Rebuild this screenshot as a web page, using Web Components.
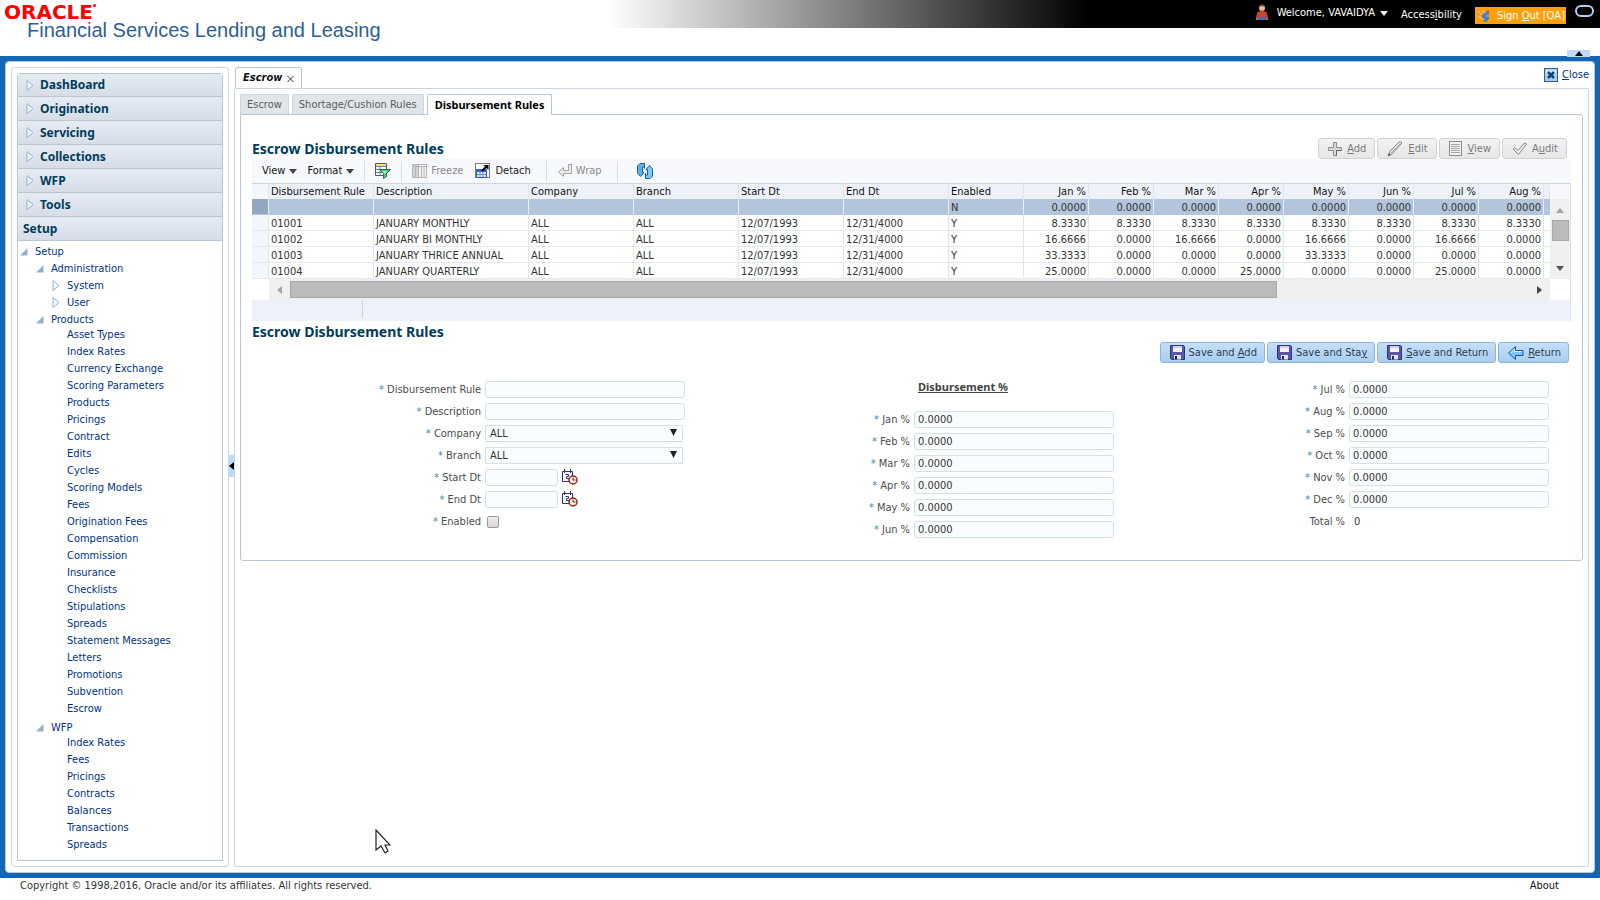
<!DOCTYPE html>
<html lang="en">
<head>
<meta charset="utf-8">
<title>Financial Services Lending and Leasing</title>
<style>
  :root {
    --line: #b9c6d3;
    --ink: #333;
    --link: #003286;
    --heading: #003d5b;
    --bold-font: "Noto Sans", "Open Sans", sans-serif;
  }
  body { margin: 0; font: 11px/16px "DejaVu Sans Condensed", "DejaVu Sans", Tahoma, sans-serif; color: var(--ink); background: #fff; }
</style>
</head>
<body>
<lending-app></lending-app>

<script>
const define = (name, html, setup) => {
  const template = document.createElement('template');
  template.innerHTML = html;
  customElements.define(name, class extends HTMLElement {
    constructor() {
      super();
      this.attachShadow({ mode: 'open' }).append(template.content.cloneNode(true));
    }
    connectedCallback() {
      if (setup && !this.ready) { this.ready = true; setup(this, this.shadowRoot); }
    }
  });
};

/* ---------- icons ---------- */
const ICONS = {
  user: [14, 18, '<circle cx="7" cy="4" r="3" fill="#e9b98c"/><path d="M4 3q1-3 3-3t3 3q-3-2-6 0z" fill="#6b4423"/><path d="M2 9q1-2 5-2t5 2l1 5H1z" fill="#c8452a"/><path d="M3 13h8v3H3z" fill="#3a6fc4"/><path d="M1 14h2v2H1zM11 14h2v2h-2z" fill="#e2582f"/>'],
  signout: [14, 14, '<path d="M1 2h8v4l-3 1v3L1 6z" fill="#f0912d"/><path d="M1 2l4 4M5 2l4 2M2 7l5 4" stroke="#ffe2a8"/><path d="M5 6l7-5v5l-4 1 4 1v2l-3 3-4-1 3-2-3-1z" fill="#3a86c8"/><path d="M9 2l3-1v4z" fill="#e0522b"/>'],
  closebox: [14, 14, '<rect x=".5" y=".5" width="13" height="13" fill="#a9cdeb" stroke="#2d5f91"/><path d="M2 2h10v4H2z" fill="#d3e6f8"/><path d="M4 4l6 6M10 4l-6 6" stroke="#0e4379" stroke-width="2.500"/>'],
  add: [14, 14, '<path d="M5.500.5h3v5h5v3h-5v5h-3v-5h-5v-3h5z" fill="#d8d8d8" stroke="#8f8f8f"/><path d="M8.500 8.500v5M8.500 8.500h5" stroke="#666"/>'],
  edit: [16, 16, '<path d="M1 15l2-5L12 1q2-1 3 1L5 13z" fill="#e3e3e3" stroke="#8a8a8a"/><path d="M4 12l9-9" stroke="#aaa"/><path d="M1 15l1-3 2 2z" fill="#555"/>'],
  view: [14, 16, '<rect x=".5" y=".5" width="12" height="14" fill="#f4f4f4" stroke="#8b8b8b"/><path d="M2 3.500h9M2 5.500h9M2 7.500h9M2 9.500h9M2 11.500h9" stroke="#a4a4a4"/>'],
  audit: [15, 14, '<path d="M1 7l2-1.500 3 3L12.500 1l2 1L6.500 12.500z" fill="#eee" stroke="#888"/>'],
  filter: [16, 16, '<path d="M.5.5h11v12H.5z" fill="#fff" stroke="#556"/><path d="M1 1h10v2H1z" fill="#f2e27c"/><path d="M1 3.500h10M1 6.500h10M1 9.500h10M5 3v10" stroke="#667aa0"/><path d="M4.500 6.500h11l-4 4v3l-3 2v-5z" fill="#4fc172" stroke="#177a3c"/><path d="M7 8h5l-2 3z" fill="#b9f0c6"/>'],
  freeze: [15, 14, '<path d="M.5.5h14v13H.5z" fill="#f3f3f3" stroke="#b5b5b5"/><path d="M1 1h5v12H1z" fill="#d2d2d2"/><path d="M.5 2.500h14M3.500 3v11M6.500 1v13M9.500 3v11M12 3v11" stroke="#b4b4b4"/>'],
  detach: [16, 16, '<rect x=".5" y=".5" width="14" height="14" fill="#fff" stroke="#000" stroke-dasharray="1 1"/><path d="M1.500 6.500h10v8h-10z" fill="#dce9fb" stroke="#2c5cb0"/><path d="M1 6h11v3H1z" fill="#2f6ad0"/><path d="M5 9v5M8 9v5M2 11.500h9" stroke="#6e93cc"/><path d="M7 8l5-5" stroke="#000" stroke-width="2"/><path d="M8.500 2h5v5z" fill="#000"/>'],
  wrap: [14, 14, '<path d="M10.500.5h3v9h-8v3l-5-4.500 5-4.500v3h5z" fill="#ececec" stroke="#a2a2a2"/>'],
  refresh: [16, 16, '<path d="M7.500.5H3L.5 3v6.500H0l3.500 4 3.500-4H5.500V4h2z" fill="#5bb3ec" stroke="#1a5da8"/><path d="M8.500 15.500H13l2.500-2.500V6.500h.5l-3.500-4-3.500 4h1.500V12h-2z" fill="#7fcaf5" stroke="#1a5da8"/><path d="M7.500.5v5M8.500 10v5" stroke="#1a5da8"/>'],
  save: [15, 15, '<path d="M.5.5h13l1 1v13H1.500l-1-1z" fill="#5a58a6" stroke="#35336f"/><path d="M3 1h9v6H3z" fill="#f2f2fb"/><path d="M3 1h9v2H3z" fill="#d0d0e6"/><path d="M4 10h7v4.500H4z" fill="#e4e4f0"/><path d="M5 11h2v3.500H5z" fill="#222055"/>'],
  back: [16, 14, '<path d="M7.500.5v4h7.500v5H7.500v4L.5 7z" fill="#7cc3f7" stroke="#1657a8"/><path d="M2.500 7L6.500 3v2.500H14" fill="none" stroke="#d8f0ff"/>'],
  calendar: [16, 16, '<path d="M.5 2.500h10v10H.5z" fill="#fbfbff" stroke="#34346c"/><path d="M2.500 0v4M8.500 0v4" stroke="#34346c"/><path d="M3.500 5.500h3v2h-2v2h3" fill="none" stroke="#34346c"/><circle cx="11" cy="11" r="4" fill="#fff6dd" stroke="#a3221e" stroke-width="1.500"/><path d="M11 8.500V11h2.500" fill="none" stroke="#333"/>'],
  right: [8, 11, '<path d="M1 .5l6 5-6 5z" fill="#f7fbff" stroke="#8fb0cf"/>'],
  open: [8, 8, '<path d="M7.500 0v7.500H0z" fill="#8fb1d0"/>'],
  drop: [7, 7, '<path d="M0 0h7L3.500 7z" fill="currentColor"/>'],
  cross: [7, 8, '<path d="M.5 1l6 6M6.500 1l-6 6" stroke="#333"/>'],
  down: [8, 5, '<path d="M0 0h8L4 5z" fill="currentColor"/>'],
  up: [8, 5, '<path d="M0 5h8L4 0z" fill="currentColor"/>'],
  left: [5, 8, '<path d="M5 0v8L0 4z" fill="currentColor"/>'],
  next: [5, 8, '<path d="M0 0v8l5-4z" fill="currentColor"/>'],
  cursor: [16, 25, '<path d="M1 1v20l5-4 4 7 3-2-3-6h5z" fill="#fff" stroke="#223" stroke-width="1.200"/>']
};
define('ui-icon', '<style>:host{display:inline-block;flex:none;line-height:0}svg{display:block}</style>', (el, root) => {
  const [w, h, body] = ICONS[el.getAttribute('name')];
  const box = document.createElement('div');
  box.innerHTML = `<svg width="${w}" height="${h}" viewBox="0 0 ${w} ${h}" fill="none" aria-hidden="true">${body}</svg>`;
  root.append(box);
});

/* ---------- banner ---------- */
define('app-banner', `
<style>
  :host { display: block; height: 56px; background: linear-gradient(90deg, #fff 38%, #000 68%) 0 0 / 100% 28px no-repeat; }
  .bar { display: flex; justify-content: space-between; align-items: flex-start; }
  .logo { display: flex; align-items: flex-start; font: bold 20px/24px "DejaVu Sans", sans-serif; color: #f00; padding-left: 4px; }
  .logo i { width: 3px; height: 3px; margin-top: 4px; border-radius: 2px; background: #f00; }
  h1 { margin: -4px 0 0 27px; font: 20px/20px "Liberation Sans", Arial, sans-serif; color: #2c6094; }
  nav { display: flex; align-items: flex-start; color: #fff; padding-right: 6px; }
  button { all: unset; cursor: pointer; }
  a { color: inherit; text-decoration: none; }
  .user { display: flex; align-items: center; gap: 8px; height: 26px; }
  .user span { display: flex; align-items: center; gap: 5px; }
  .acc { padding: 7px 13px 0 13px; }
  .out { display: flex; align-items: center; gap: 6px; margin-top: 7px; height: 17px; background: #ff9f0a; padding: 0 1px 0 2px; }
  .ring { width: 15px; height: 8px; border: 2px solid #b4cdf0; border-radius: 8px; margin: 5px 0 0 9px; }
</style>
<div class="bar">
  <div><span class="logo">ORACLE<i></i></span><h1>Financial Services Lending and Leasing</h1></div>
  <nav>
    <button class="user"><ui-icon name="user"></ui-icon><span>Welcome, VAVAIDYA <ui-icon name="down"></ui-icon></span></button>
    <a class="acc" href="#">Access<u>i</u>bility</a>
    <a class="out" href="#"><ui-icon name="signout"></ui-icon><span>Sign <u>O</u>ut [QA]</span></a>
    <div class="ring"></div>
  </nav>
</div>`);

/* ---------- side navigation ---------- */
const TREE = [
  ['open', 0, 'Setup'], ['open', 1, 'Administration'], ['right', 2, 'System'], ['right', 2, 'User'],
  ['open', 1, 'Products', ['Asset Types', 'Index Rates', 'Currency Exchange', 'Scoring Parameters', 'Products', 'Pricings', 'Contract', 'Edits', 'Cycles', 'Scoring Models', 'Fees', 'Origination Fees', 'Compensation', 'Commission', 'Insurance', 'Checklists', 'Stipulations', 'Spreads', 'Statement Messages', 'Letters', 'Promotions', 'Subvention', 'Escrow']],
  ['open', 1, 'WFP', ['Index Rates', 'Fees', 'Pricings', 'Contracts', 'Balances', 'Transactions', 'Spreads']]
];
define('nav-tree', `
<style>
  :host { display: block; padding: 2px 0 3px 2px; }
  ul { list-style: none; margin: 0; padding: 0; }
  a { color: var(--link); text-decoration: none; line-height: 17px; }
  .row { display: flex; align-items: center; height: 17px; }
  .row ui-icon { width: 15px; }
  .l1 { padding-left: 16px; } .l2 { padding-left: 32px; }
  ul ul { margin: -2px 0 2px 47px; }
  ul ul li { height: 17px; }
</style><ul></ul>`, (el, root) => {
  root.querySelector('ul').innerHTML = TREE.map(([icon, level, name, kids]) =>
    `<li><div class="row l${level}"><ui-icon name="${icon}"></ui-icon><a href="#">${name}</a></div>${kids ? `<ul>${kids.map(k => `<li><a href="#">${k}</a></li>`).join('')}</ul>` : ''}</li>`).join('');
});
define('side-nav', `
<style>
  :host { display: block; position: relative; box-sizing: border-box; width: 218px; flex: none; border: 1px solid #cbd5df; border-radius: 3px; padding: 5px; }
  .box { box-sizing: border-box; height: 100%; border: 1px solid var(--line); border-top: 0; border-radius: 4px 4px 0 0; overflow: hidden; }
  h2 { margin: 0; }
  h2 button { all: unset; box-sizing: border-box; display: flex; align-items: center; gap: 6px; width: 100%; height: 24px; padding-left: 8px; cursor: pointer;
    font: bold 12px/23px var(--bold-font); color: var(--heading); border-bottom: 1px solid var(--line); background: linear-gradient(#e6ebf3, #d6dde7); }
  h2:first-child button { line-height: 22px; border-top: 1px solid var(--line); }
  h2 button.current { padding-left: 5px; }
  .grip { all: unset; position: absolute; right: -7px; top: 50%; margin-top: -12px; width: 7px; height: 22px; background: #c0daf5; color: #000; display: flex; align-items: center; justify-content: center; }
</style>
<div class="box"><div class="heads"></div><nav-tree></nav-tree></div>
<button class="grip" aria-label="Collapse pane"><ui-icon name="left"></ui-icon></button>`, (el, root) => {
  root.querySelector('.heads').innerHTML = ['DashBoard', 'Origination', 'Servicing', 'Collections', 'WFP', 'Tools']
    .map(t => `<h2><button><ui-icon name="right"></ui-icon>${t}</button></h2>`).join('') + '<h2><button class="current">Setup</button></h2>';
});

/* ---------- buttons ---------- */
define('action-button', `
<style>
  :host { display: inline-block; }
  button { box-sizing: border-box; display: flex; align-items: center; gap: 4px; height: 21px; padding: 0 7px 0 9px; margin: 0; font: inherit; white-space: nowrap;
    border: 1px solid #8fb4da; border-radius: 3px; color: #2b3d4f; background: linear-gradient(#c5dff8, #a9cdf0); }
  :host([muted]) button { gap: 5px; padding: 0 8px 0 9px; color: #7b7b7b; border-color: #d2d2d2; background: linear-gradient(#f3f3f3, #e6e6e6); }
</style><button><slot name="icon"></slot><span><slot></slot></span></button>`);

/* ---------- table tool bar ---------- */
define('table-toolbar', `
<style>
  :host { display: flex; align-items: center; height: 24px; background: #f6f8fb; color: #222; }
  button { all: unset; display: flex; align-items: center; gap: 4px; cursor: pointer; }
  button[disabled] { color: #8b8b8b; }
  .menu { margin-left: 10px; color: #111; }
  i { width: 1px; height: 20px; margin: 0 10px; background: #d5dde6; }
  .wide { margin: 0 11px 0 15px; }
  .far { margin: 0 19px 0 15px; }
  .detach { margin-left: 12px; }
  ui-icon[name="down"] { color: #444; }
</style>
<button class="menu">View <ui-icon name="down"></ui-icon></button>
<button class="menu">Format <ui-icon name="down"></ui-icon></button>
<i></i>
<button aria-label="Query by example"><ui-icon name="filter"></ui-icon></button>
<i></i>
<button disabled><ui-icon name="freeze"></ui-icon>Freeze</button>
<button class="detach"><ui-icon name="detach"></ui-icon>Detach</button>
<i class="wide"></i>
<button disabled><ui-icon name="wrap"></ui-icon>Wrap</button>
<i class="far"></i>
<button aria-label="Refresh"><ui-icon name="refresh"></ui-icon></button>`);

/* ---------- rules table ---------- */
const COLS = [['', 17], ['Disbursement Rule', 105], ['Description', 155], ['Company', 105], ['Branch', 105], ['Start Dt', 105], ['End Dt', 105], ['Enabled', 75],
  ...['Jan', 'Feb', 'Mar', 'Apr', 'May', 'Jun', 'Jul', 'Aug'].map(m => [m + ' %', 65]), ['', 0]];
const Z = '0.0000', M = '8.3330', B = '16.6666', T = '33.3333', Q = '25.0000';
const rule = (code, name, ...pct) => ['', code, name, 'ALL', 'ALL', '12/07/1993', '12/31/4000', 'Y', ...pct, ''];
const ROWS = [
  ['', '', '', '', '', '', '', 'N', Z, Z, Z, Z, Z, Z, Z, Z, ''],
  rule('01001', 'JANUARY MONTHLY', M, M, M, M, M, M, M, M),
  rule('01002', 'JANUARY BI MONTHLY', B, Z, B, Z, B, Z, B, Z),
  rule('01003', 'JANUARY THRICE ANNUAL', T, Z, Z, Z, T, Z, Z, Z),
  rule('01004', 'JANUARY QUARTERLY', Q, Z, Z, Q, Z, Z, Q, Z)
];
define('rules-table', `
<style>
  :host { display: block; border-right: 1px solid #d9e2eb; }
  .grid { display: grid; grid-template-columns: 1fr 20px; }
  table { width: 100%; table-layout: fixed; border-collapse: separate; border-spacing: 0; white-space: nowrap; }
  th, td { box-sizing: border-box; height: 16px; padding: 0 2px; line-height: 15px; text-align: left; font-weight: normal; border-right: 1px solid #dde6ee; border-bottom: 1px solid #e3e9ef; overflow: hidden; }
  td { padding-top: 2px; line-height: 13px; }
  th { color: #111; background: #eef2f8; border-top: 1px solid #ccd6e0; border-bottom: 0; }
  .n { text-align: right; }
  th:first-child, td:first-child { background: #f3f6fa; }
  .sel td { background: #b2c5dc; border-color: #e9eff6; border-bottom-color: #b2c5dc; }
  .sel td:first-child { background: #93a7c1; }
  td:last-child { border-right: 0; }
  .corner { display: flex; flex-direction: column; }
  .corner b { height: 15px; border-top: 1px solid #ccd6e0; background: #f6f8fb; }
  .v { flex: 1; background: #f0f0f0; color: #555; display: flex; flex-direction: column; align-items: center; padding: 9px 0 8px; }
  .v ui-icon:first-child, .h ui-icon:first-child { color: #a3a3a3; }
  .v div { box-sizing: border-box; width: 17px; height: 21px; border: 1px solid #a8a8a8; background: #bbb; margin: 7px 0 auto; }
  .h { box-sizing: border-box; height: 21px; margin-left: 17px; padding: 0 8px; background: #f0f0f0; color: #444; display: flex; align-items: center; gap: 8px; }
  .h div { box-sizing: border-box; width: 78%; height: 17px; border: 1px solid #a8a8a8; background: #bbb; margin-right: auto; }
  footer { height: 21px; background: #eef2f8; }
  footer div { width: 110px; height: 18px; border-right: 1px solid #ccd6e0; }
</style>
<div class="grid">
  <table><colgroup></colgroup><thead><tr></tr></thead><tbody></tbody></table>
  <div class="corner"><b></b><div class="v"><ui-icon name="up"></ui-icon><div></div><ui-icon name="down"></ui-icon></div></div>
  <div class="h"><ui-icon name="left"></ui-icon><div></div><ui-icon name="next"></ui-icon></div>
</div>
<footer><div></div></footer>`, (el, root) => {
  const cls = i => i > 7 ? ' class="n"' : '';
  root.querySelector('colgroup').innerHTML = COLS.map(([, w]) => `<col${w ? ` style="width:${w}px"` : ''}>`).join('');
  root.querySelector('thead tr').innerHTML = COLS.map(([t], i) => `<th${cls(i)}>${t}</th>`).join('');
  root.querySelector('tbody').innerHTML = ROWS.map((r, k) => `<tr${k ? '' : ' class="sel"'}>${r.map((c, i) => `<td${cls(i)}>${c}</td>`).join('')}</tr>`).join('');
});

/* ---------- form ---------- */
define('form-field', `
<style>
  :host { display: flex; height: 17px; }
  label { flex: 1; text-align: right; color: #4c4c4c; line-height: 17px; padding-right: 4px; white-space: nowrap; }
  label i { font-style: normal; color: #4b86a8; }
  .slot { flex: none; width: 200px; display: flex; align-items: center; }
  input, select { box-sizing: border-box; margin: 0; height: 17px; width: 200px; padding: 0 3px; font: inherit; color: var(--ink); border: 1px solid #d5dfe6; border-radius: 3px; background: #fafdff; outline: 0; }
  .date { width: 73px; }
  select { display: block; width: 198px; appearance: none; border-radius: 1px; padding: 0 4px; }
  .pick { position: relative; }
  .pick ui-icon { position: absolute; right: 6px; top: 4px; pointer-events: none; color: #222; }
  .cal { all: unset; display: flex; margin: -2px 0 0 4px; cursor: pointer; }
  input[type=checkbox] { appearance: none; width: 12px; height: 12px; margin-left: 2px; padding: 0; border-color: #999; border-radius: 2px; background: linear-gradient(#eee, #d8d8d8); }
  output { padding-left: 5px; line-height: 17px; }
</style>
<label for="c"></label><div class="slot"></div>`, (el, root) => {
  const type = el.getAttribute('type') || 'text', value = el.getAttribute('value') || '';
  root.querySelector('label').innerHTML = (type === 'output' ? '' : '<i>*</i> ') + el.getAttribute('label');
  root.querySelector('.slot').innerHTML = {
    text: `<input id="c" value="${value}">`,
    select: `<span class="pick"><select id="c"><option>${value}</option></select><ui-icon name="drop"></ui-icon></span>`,
    date: `<input id="c" class="date"><button class="cal" aria-label="Select date"><ui-icon name="calendar"></ui-icon></button>`,
    check: `<input id="c" type="checkbox">`,
    output: `<output id="c">${value}</output>`
  }[type];
});
define('rule-form', `
<style>
  :host { display: grid; grid-template-columns: 433fr 429fr 435fr; padding: 18px 22px 22px 0; }
  .col { display: flex; flex-direction: column; gap: 5px; }
  h4 { margin: 0 0 13px; height: 12px; width: 196px; align-self: flex-end; font: bold 11px/12px var(--bold-font); color: #444; text-decoration: underline; }
</style>
<div class="col">
  <form-field label="Disbursement Rule"></form-field>
  <form-field label="Description"></form-field>
  <form-field label="Company" type="select" value="ALL"></form-field>
  <form-field label="Branch" type="select" value="ALL"></form-field>
  <form-field label="Start Dt" type="date"></form-field>
  <form-field label="End Dt" type="date"></form-field>
  <form-field label="Enabled" type="check"></form-field>
</div>
<div class="col" id="mid"><h4>Disbursement %</h4></div>
<div class="col" id="end"></div>`, (el, root) => {
  const fields = names => names.map(n => `<form-field label="${n} %" value="0.0000"></form-field>`).join('');
  root.getElementById('mid').insertAdjacentHTML('beforeend', fields(['Jan', 'Feb', 'Mar', 'Apr', 'May', 'Jun']));
  root.getElementById('end').innerHTML = fields(['Jul', 'Aug', 'Sep', 'Oct', 'Nov', 'Dec']) + '<form-field label="Total %" type="output" value="0"></form-field>';
});

/* ---------- work area ---------- */
define('work-area', `
<style>
  :host { display: flex; flex-direction: column; flex: 1; min-width: 0; }
  .top { display: flex; justify-content: space-between; align-items: flex-start; height: 21px; }
  .win { box-sizing: border-box; display: flex; align-items: center; gap: 5px; height: 21px; margin-left: 1px; padding: 0 7px; border: 1px solid var(--line); border-bottom: 0; border-radius: 3px 3px 0 0; font: italic bold 11px/20px "DejaVu Sans Condensed", sans-serif; color: #111; }
  .win button { all: unset; padding-top: 3px; cursor: pointer; }
  .close { display: flex; align-items: center; gap: 4px; color: var(--link); text-decoration: none; }
  .body { flex: 1; border: 1px solid #cbd5df; border-radius: 2px; padding: 5px; }
  .tabs { display: flex; gap: 3px; height: 20px; }
  .tabs button { box-sizing: border-box; height: 20px; margin: 0; padding: 1px 6px 0; border: 1px solid #ccd5db; border-bottom: 0; border-radius: 2px 2px 0 0; background: #dfe5e8; font: inherit; color: #5c5c5c; }
  .tabs button.on { height: 21px; padding: 0 7px; background: #fff; border-color: var(--line); font: bold 11px/18px var(--bold-font); color: #000; position: relative; }
  .panel { border: 1px solid var(--line); border-radius: 0 3px 3px 3px; padding: 23px 11px 0; }
  .head { display: flex; justify-content: space-between; align-items: center; height: 21px; padding-right: 4px; }
  h3 { margin: 0; font: bold 14px/21px var(--bold-font); color: var(--heading); }
  .btns { display: flex; gap: 2px; }
  .save { justify-content: flex-end; padding-right: 2px; }
</style>
<div class="top">
  <div class="win">Escrow <button aria-label="Close tab"><ui-icon name="cross"></ui-icon></button></div>
  <a class="close" href="#"><ui-icon name="closebox"></ui-icon><span><u>C</u>lose</span></a>
</div>
<div class="body">
  <div class="tabs"><button>Escrow</button><button>Shortage/Cushion Rules</button><button class="on">Disbursement Rules</button></div>
  <div class="panel">
    <div class="head"><h3>Escrow Disbursement Rules</h3>
      <div class="btns">
        <action-button muted><ui-icon slot="icon" name="add"></ui-icon><u>A</u>dd</action-button>
        <action-button muted><ui-icon slot="icon" name="edit"></ui-icon><u>E</u>dit</action-button>
        <action-button muted><ui-icon slot="icon" name="view"></ui-icon><u>V</u>iew</action-button>
        <action-button muted><ui-icon slot="icon" name="audit"></ui-icon>A<u>u</u>dit</action-button>
      </div>
    </div>
    <table-toolbar></table-toolbar>
    <rules-table></rules-table>
    <div class="head"><h3>Escrow Disbursement Rules</h3></div>
    <div class="btns save">
      <action-button><ui-icon slot="icon" name="save"></ui-icon>Save and <u>A</u>dd</action-button>
      <action-button><ui-icon slot="icon" name="save"></ui-icon>Save and Sta<u>y</u></action-button>
      <action-button><ui-icon slot="icon" name="save"></ui-icon><u>S</u>ave and Return</action-button>
      <action-button><ui-icon slot="icon" name="back"></ui-icon><u>R</u>eturn</action-button>
    </div>
    <rule-form></rule-form>
  </div>
</div>`);

/* ---------- page ---------- */
define('app-frame', `
<style>
  :host { display: flex; flex: 1; position: relative; background: #1466b4; padding: 5px; }
  .in { flex: 1; display: flex; gap: 5px; min-width: 0; background: #fff; border: 1px solid #b5c8dc; border-radius: 4px; padding: 5px; }
  .fold { all: unset; position: absolute; right: 10px; top: -6px; width: 23px; height: 7px; background: #c0daf5; color: #000; display: flex; align-items: center; justify-content: center; }
</style><div class="in"><slot></slot></div><button class="fold" aria-label="Collapse banner"><ui-icon name="up"></ui-icon></button>`);
define('lending-app', `
<style>
  :host { display: flex; flex-direction: column; min-height: 100vh; position: relative; overflow: hidden; }
  footer { display: flex; justify-content: space-between; height: 22px; padding: 0 41px 0 20px; line-height: 15px; }
  footer a { color: #111; text-decoration: none; line-height: 16px; }
  .pointer { position: absolute; left: 375px; top: 829px; }
</style>
<app-banner></app-banner>
<app-frame><side-nav></side-nav><work-area></work-area></app-frame>
<footer><span>Copyright © 1998,2016, Oracle and/or its affiliates. All rights reserved.</span><a href="#">About</a></footer>
<ui-icon class="pointer" name="cursor"></ui-icon>`);
</script>
</body>
</html>
